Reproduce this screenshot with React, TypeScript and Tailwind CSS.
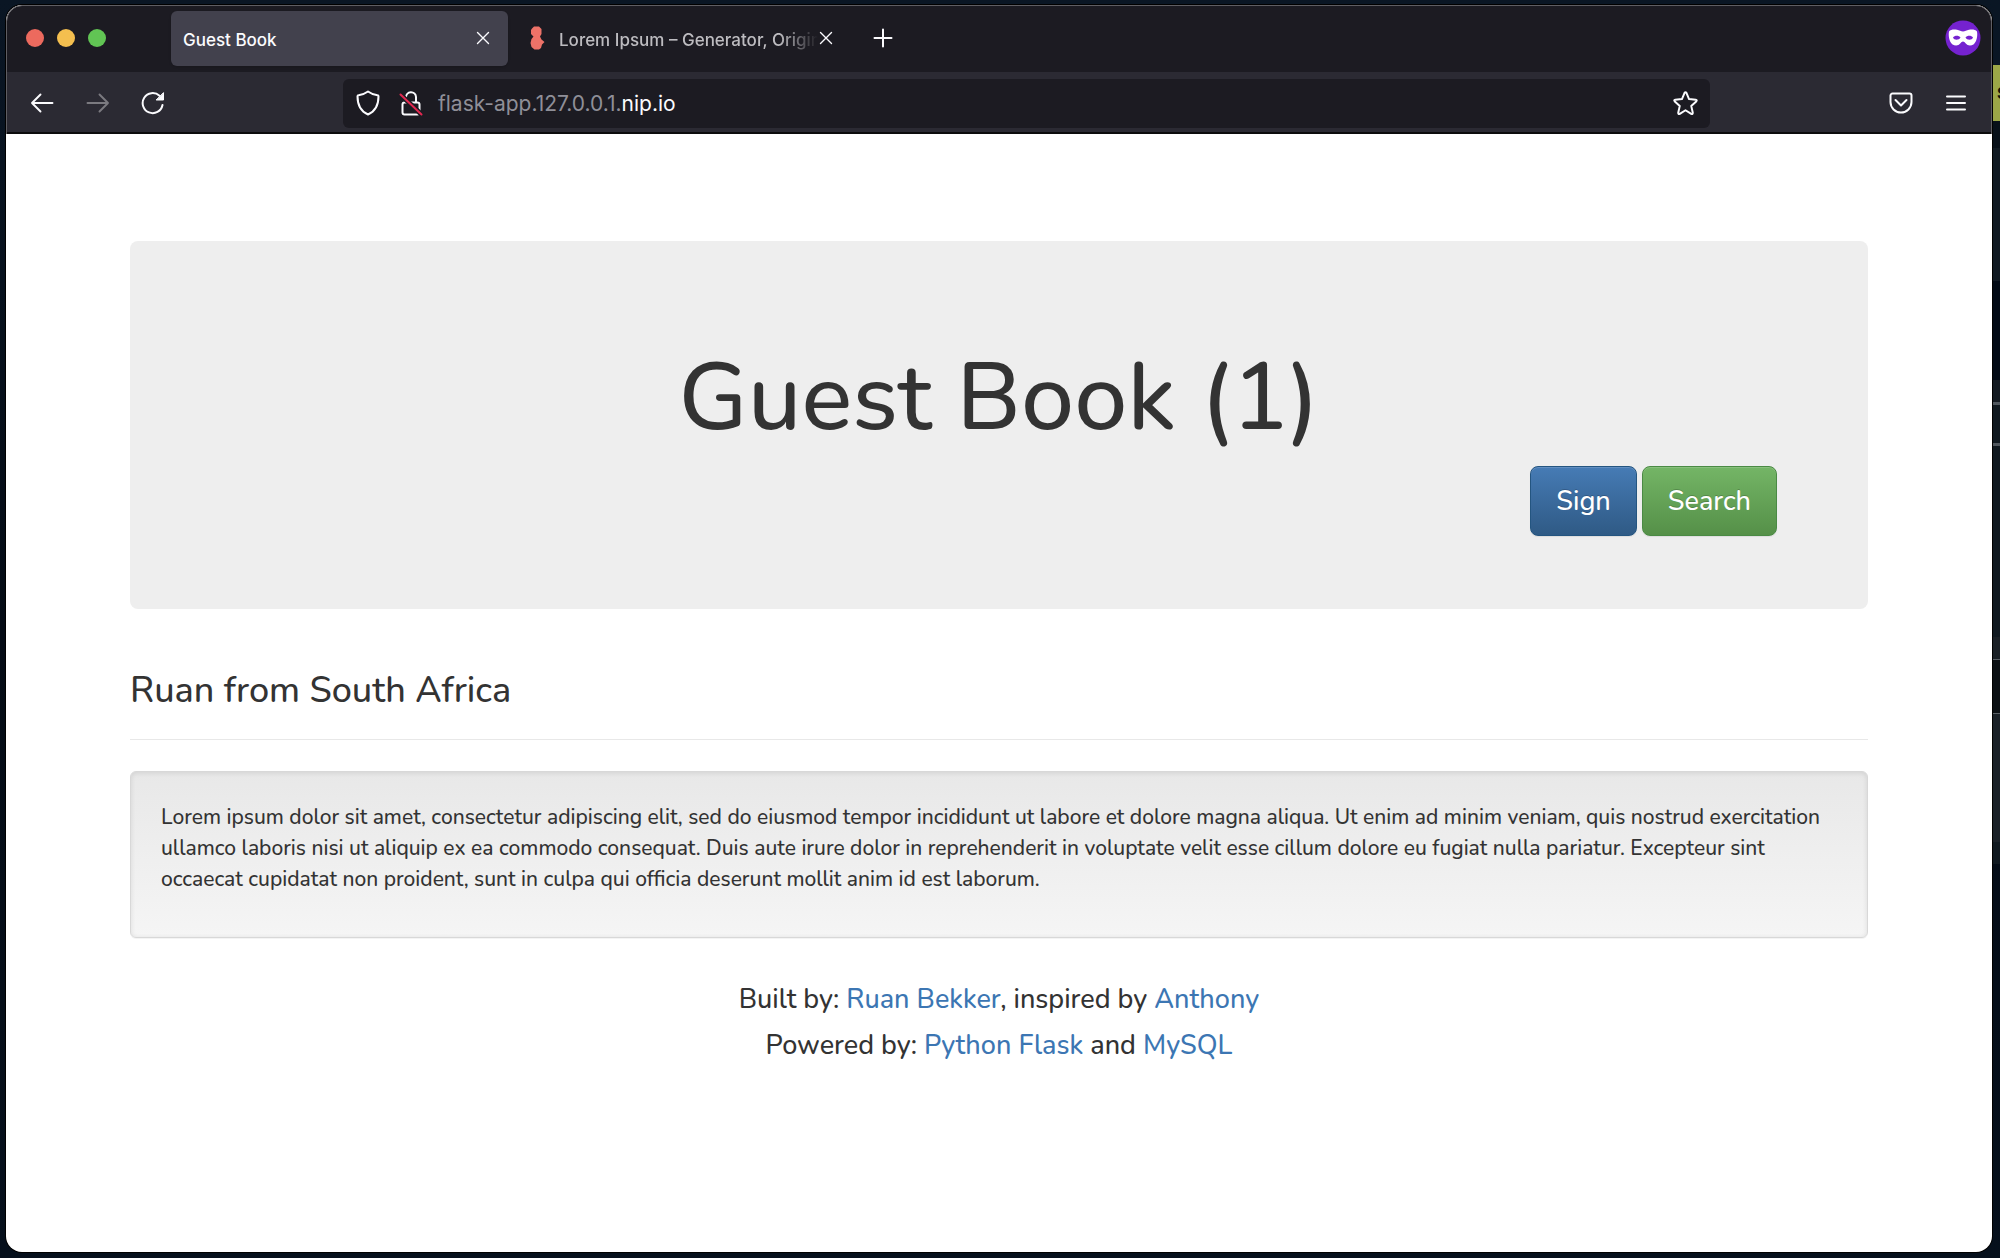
import type { ReactNode } from 'react'

// colour bands of the desktop that peek out right of the window
const bands = [
  { h: 65, className: 'bg-[#0a1624]' },
  { h: 56, className: 'bg-[#9ca747]', letter: 'S' },
  { h: 27, className: 'bg-[#081019]' },
  { h: 133, className: 'bg-[#111a23]' },
  { h: 99, className: 'bg-[#020a15]' },
  { h: 22, className: 'bg-[#141b22]' },
  { h: 3, className: 'bg-[#50575e]' },
  { h: 38, className: 'bg-[#101920]' },
  { h: 3, className: 'bg-[#50575e]' },
  { h: 191, className: 'bg-[#101920]' },
  { h: 22, className: 'bg-[#1a2026]' },
  { h: 1, className: 'bg-[#5a6066]' },
  { h: 53, className: 'bg-[#0b1014]' },
  { h: 1, className: 'bg-[#5a6066]' },
  { h: 128, className: 'bg-[#1a2128]' },
  { h: 22, className: 'bg-[#101920]' },
]

function CloseIcon() {
  return (
    <svg viewBox="0 0 14 14" className="size-3.5" fill="none" stroke="currentColor" strokeWidth="1.4" strokeLinecap="round">
      <path d="M1.5 1.5l11 11M12.5 1.5l-11 11" />
    </svg>
  )
}

function ToolButton({ label, className = '', children }: { label: string; className?: string; children: ReactNode }) {
  return (
    <button type="button" aria-label={label} className={`flex items-center justify-center shrink-0 ${className}`}>
      {children}
    </button>
  )
}

function TabBar() {
  return (
    <div className="flex h-[66px] items-center bg-[#1c1b22] pr-2.5 pb-0.5 pl-[19px] text-[17px] font-medium">
      <div className="flex w-20 shrink-0 justify-between">
        <button type="button" aria-label="Close window" className="size-[18px] rounded-full bg-[#ec6a5e]" />
        <button type="button" aria-label="Minimize window" className="size-[18px] rounded-full bg-[#f4bf4f]" />
        <button type="button" aria-label="Zoom window" className="size-[18px] rounded-full bg-[#61c554]" />
      </div>

      <div className="ml-[65px] flex h-[55px] w-[337px] items-center justify-between rounded-md bg-[#42414d] pr-[18px] pl-3 text-[#fbfbfe] shadow">
        <span className="pt-1.5">Guest Book</span>
        <ToolButton label="Close tab"><CloseIcon /></ToolButton>
      </div>

      <div className="flex h-[55px] w-[326px] items-center pl-[22px] text-[#bdbcc0]">
        <svg viewBox="0 0 15 24" className="h-6 w-[15px] shrink-0" fill="#ed7268">
          <path d="M2 2.5L4 .5h5l2.500 2.500v5L10 10.500l1.500 3L14.500 16 12 18.500 11 22 9 23.500H4.500L1.500 21 .5 17l1-4 2-2.500L1 8V4z" />
        </svg>
        <span className="ml-3.5 min-w-0 flex-1 overflow-hidden pt-1.5 whitespace-nowrap mask-r-from-85% mask-r-to-100%">
          Lorem Ipsum – Generator, Origin
        </span>
        <ToolButton label="Close tab" className="w-4 text-[#fbfbfe]"><CloseIcon /></ToolButton>
      </div>

      <ToolButton label="New tab" className="ml-[39px] text-[#fbfbfe]">
        <svg viewBox="0 0 20 20" className="size-5" stroke="currentColor" strokeWidth="2" strokeLinecap="round">
          <path d="M10 1.500v17M1.500 10h17" />
        </svg>
      </ToolButton>

      <svg viewBox="0 0 36 36" className="ml-auto size-9 shrink-0" role="img" aria-label="Private browsing">
        <circle cx="18" cy="18" r="17.500" fill="#7522d0" />
        <path
          fill="#fff"
          fillRule="evenodd"
          d="M4 11.500C5.500 9.500 9 9.300 12 9.800c2.500.4 4 1.700 6 1.700s3.500-1.300 6-1.700c3-.5 6.500-.3 8 1.700.8 4.500-.3 10-3.200 12.700-3 2-6.300 1.500-8-.7-1-1.300-1.800-2-2.800-2s-1.800.7-2.800 2c-1.700 2.200-5 2.700-8 .7C4.300 21.500 3.200 16 4 11.500zM8 17.500c1 3 6 3 7.500 0-1.500-2.500-6-2.500-7.500 0zm12.500 0c1.500 3 6.500 3 7.500 0-1.500-2.500-6-2.500-7.500 0z"
        />
      </svg>
    </div>
  )
}

function Toolbar() {
  return (
    <div className="flex h-[62px] items-center border-b-2 border-[#0c0c0d] bg-[#2b2a33] px-[23px] pt-0.5 text-[#fbfbfe]">
      <ToolButton label="Back">
        <svg viewBox="0 0 24 24" className="size-6" fill="none" stroke="currentColor" strokeWidth="1.900" strokeLinecap="round" strokeLinejoin="round">
          <path d="M22.500 12H2M10.500 3.500L2 12l8.500 8.500" />
        </svg>
      </ToolButton>
      <ToolButton label="Forward" className="ml-8 text-[#7b7a80]">
        <svg viewBox="0 0 24 24" className="size-6" fill="none" stroke="currentColor" strokeWidth="1.900" strokeLinecap="round" strokeLinejoin="round">
          <path d="M1.500 12H22M13.500 3.500L22 12l-8.500 8.500" />
        </svg>
      </ToolButton>
      <ToolButton label="Reload" className="ml-[31px]">
        <svg viewBox="0 0 24 24" className="size-6" fill="none" stroke="currentColor" strokeWidth="2" strokeLinecap="round">
          <path d="M21.500 14A10 10 0 1 1 18.500 4.800" />
          <path d="M22.500 2v7h-7z" fill="currentColor" strokeWidth="1" strokeLinejoin="round" />
        </svg>
      </ToolButton>

      <div className="ml-[178px] flex h-[49px] min-w-0 flex-1 items-center rounded-md bg-[#1c1b22] pr-3 pl-[13px]">
        <ToolButton label="Tracking protection">
          <svg viewBox="0 0 24 26" className="h-[26px] w-6" fill="none" stroke="currentColor" strokeWidth="2" strokeLinejoin="round">
            <path d="M12 1.500c3 2.200 6 3.300 9.500 3.800.7 0 1 .4 1 1C22.500 15 19 21.500 12 24.500 5 21.500 1.500 15 1.500 6.300c0-.6.300-1 1-1C6 4.800 9 3.700 12 1.500z" />
          </svg>
        </ToolButton>
        <ToolButton label="Connection not secure" className="ml-[19px]">
          <svg viewBox="0 0 24 26" className="h-[26px] w-6" fill="none" stroke="currentColor" strokeWidth="2" strokeLinecap="round">
            <rect x="3.500" y="12.500" width="17" height="12" rx="2" />
            <path d="M7 7.500a5 5 0 0 1 10-.5v5" />
            <path d="M1.500 4.500l21 20" stroke="#1c1b22" strokeWidth="5" />
            <path d="M1.500 4.500l21 20" stroke="#e22850" />
          </svg>
        </ToolButton>
        <a href="http://flask-app.127.0.0.1.nip.io" className="ml-[15px] flex-1 pt-0.5 text-[21px] text-[#8f8f98]">
          flask-app.127.0.0.1.<span className="text-[#fbfbfe]">nip.io</span>
        </a>
        <ToolButton label="Bookmark this page">
          <svg viewBox="0 0 24 24" className="size-[25px]" fill="none" stroke="currentColor" strokeWidth="1.900" strokeLinejoin="round">
            <path d="M11.100 1.800q.9-1.400 1.800 0l2.500 5.900 6.400.6q1.700.4.500 1.700l-4.800 4.300 1.500 6.500q.1 1.800-1.500 1.100L12 18.500l-5.500 3.400q-1.600.7-1.500-1.100l1.500-6.500L1.700 10q-1.200-1.300.5-1.700l6.400-.6z" />
          </svg>
        </ToolButton>
      </div>

      <ToolButton label="Save to Pocket" className="ml-[179px]">
        <svg viewBox="0 0 24 22" className="h-[22px] w-6" fill="none" stroke="currentColor" strokeWidth="2" strokeLinecap="round" strokeLinejoin="round">
          <path d="M3.500 1.500h17a2 2 0 0 1 2 2V10a10.500 10.500 0 0 1-21 0V3.500a2 2 0 0 1 2-2z" />
          <path d="M6.500 8l5.500 5.500L17.500 8" />
        </svg>
      </ToolButton>
      <ToolButton label="Open menu" className="ml-[31px]">
        <svg viewBox="0 0 24 24" className="size-6" stroke="currentColor" strokeWidth="2" strokeLinecap="round">
          <path d="M3 5.500h18M3 12h18M3 18.500h18" />
        </svg>
      </ToolButton>
    </div>
  )
}

function GuestBook() {
  return (
    <main className="flex-1 px-[124px] pt-[107px] pb-16 font-['Nunito','Lato',sans-serif] font-medium text-[#333]">
      <header className="rounded-lg bg-[#eee] px-[91px] pt-[93px] pb-[73px]">
        <h1 className="text-center text-[95px] leading-[128px]">Guest Book (1)</h1>
        <div className="mt-1 flex justify-end gap-[5px]">
          <button
            type="button"
            className="h-[70px] rounded-lg border border-[#245580] bg-linear-to-b from-[#467bb5] to-[#2f5a85] px-[25px] pt-0.5 text-[27px] text-white shadow-[inset_0_1px_0_rgba(255,255,255,0.15),0_1px_1px_rgba(0,0,0,0.075)] text-shadow-[0_-1px_0_rgba(0,0,0,0.2)]"
          >
            Sign
          </button>
          <button
            type="button"
            className="h-[70px] rounded-lg border border-[#4a8a44] bg-linear-to-b from-[#74b566] to-[#559048] px-[25px] pt-0.5 text-[27px] text-white shadow-[inset_0_1px_0_rgba(255,255,255,0.15),0_1px_1px_rgba(0,0,0,0.075)] text-shadow-[0_-1px_0_rgba(0,0,0,0.2)]"
          >
            Search
          </button>
        </div>
      </header>

      <h3 className="mt-[62px] text-[36px] leading-10">Ruan from South Africa</h3>
      <hr className="mt-7 border-[#e8e8e8]" />

      <section className="mt-[31px] rounded-md border border-[#d8d8d8] bg-linear-to-b from-[#e8e8e8] to-[#f5f5f5] px-[30px] pt-[30px] pb-[42px] shadow-[inset_0_1px_5px_rgba(0,0,0,0.1),0_1px_0_#f4f4f4]">
        <p className="text-[21px] leading-[31px]">
          Lorem ipsum dolor sit amet, consectetur adipiscing elit, sed do eiusmod tempor incididunt ut labore et dolore
          magna aliqua. Ut enim ad minim veniam, quis nostrud exercitation ullamco laboris nisi ut aliquip ex ea commodo
          consequat. Duis aute irure dolor in reprehenderit in voluptate velit esse cillum dolore eu fugiat nulla
          pariatur. Excepteur sint occaecat cupidatat non proident, sunt in culpa qui officia deserunt mollit anim id
          est laborum.
        </p>
      </section>

      <footer className="mt-[39px] text-center text-[27px] leading-[46px]">
        <p>
          Built by: <a href="#ruan" className="text-[#3c76b3]">Ruan Bekker</a>, inspired by{' '}
          <a href="#anthony" className="text-[#3c76b3]">Anthony</a>
        </p>
        <p>
          Powered by: <a href="#flask" className="text-[#3c76b3]">Python Flask</a> and{' '}
          <a href="#mysql" className="text-[#3c76b3]">MySQL</a>
        </p>
      </footer>
    </main>
  )
}

export default function App() {
  return (
    <div className="flex min-h-screen bg-linear-to-b from-[#0a1624] via-[#040b15] to-[#06101c] font-['Inter',sans-serif]">
      <div className="mt-[5px] mb-[6px] ml-[6px] flex min-w-0 flex-1 flex-col overflow-hidden rounded-2xl bg-white shadow-[0_0_0_1px_#000]">
        <div className="rounded-t-2xl border border-b-0 border-[#5f5e63]">
          <div className="overflow-hidden rounded-t-[15px]">
            <TabBar />
            <Toolbar />
          </div>
        </div>
        <GuestBook />
      </div>
      <div className="ml-px w-[7px] shrink-0 overflow-hidden" aria-hidden="true">
        {bands.map((band, i) => (
          <div key={i} className={`flex items-center pl-1 font-bold text-[#10140a] ${band.className}`} style={{ height: band.h }}>
            {band.letter}
          </div>
        ))}
      </div>
    </div>
  )
}
